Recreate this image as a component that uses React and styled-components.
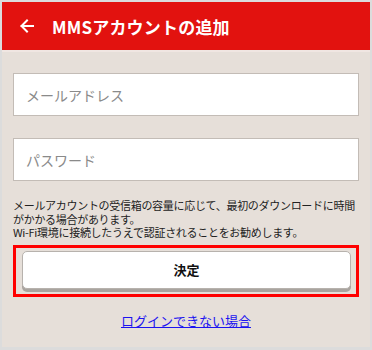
import React from 'react';
import styled, { createGlobalStyle } from 'styled-components';

const GlobalStyle = createGlobalStyle`
  html, body {
    margin: 0;
    padding: 0;
    background: #dcdcdc;
  }
  body {
    font-family: "Noto Sans CJK JP", "Liberation Sans", sans-serif;
  }
`;

const Frame = styled.div`
  width: 372px;
  height: 350px;
  box-sizing: border-box;
  padding: 2px 2px 3px 2px;
  background: #dcdcdc;
`;

const Screen = styled.div`
  height: 100%;
  display: flex;
  flex-direction: column;
  background: #e6dfd9;
`;

const Header = styled.header`
  height: 48px;
  flex-shrink: 0;
  display: flex;
  align-items: center;
  background: #e2120f;
  border-bottom: 2px solid #f0e6e2;
  color: #fff;
`;

const BackButton = styled.span`
  width: 50px;
  display: flex;
  justify-content: center;
`;

const Title = styled.h1`
  margin: 0;
  font-size: 17px;
  font-weight: 700;
  letter-spacing: 0.2px;
`;

const Body = styled.main`
  display: flex;
  flex-direction: column;
  padding: 21px 11px 0 11px;
`;

const Field = styled.input`
  height: 43px;
  box-sizing: border-box;
  border: 1px solid #c3bcb6;
  background: #fff;
  padding: 0 12px;
  font-family: inherit;
  font-size: 14px;
  color: #333;
  margin-bottom: ${p => p.gap}px;
  outline: none;
  &::placeholder {
    color: #8a8a8a;
  }
`;

const Note = styled.p`
  margin: 0 0 5px;
  font-size: 11px;
  line-height: 13.5px;
  color: #222;
  letter-spacing: -0.3px;
`;

const Highlight = styled.div`
  border: 3px solid #ff0000;
  padding: 3px 5px 5px 6px;
`;

const SubmitButton = styled.button`
  width: 100%;
  height: 38px;
  background: #fff;
  border: 1px solid #b7b2ad;
  border-radius: 5px;
  box-shadow: 0 3px 0 #a9a49f;
  font-family: inherit;
  font-size: 13px;
  font-weight: 700;
  color: #111;
`;

const HelpLink = styled.a`
  align-self: center;
  margin-top: 14px;
  font-size: 13px;
  color: #1c14f0;
  text-decoration: underline;
`;

const ArrowIcon = () => (
  <svg width="16" height="16" viewBox="0 0 16 16" fill="none" stroke="#fff" strokeWidth="2" strokeLinecap="square">
    <path d="M14 8H2.5M8 2.5L2.5 8L8 13.5" />
  </svg>
);

export default function App() {
  return (
    <>
      <GlobalStyle />
      <Frame>
        <Screen>
          <Header>
            <BackButton><ArrowIcon /></BackButton>
            <Title>MMSアカウントの追加</Title>
          </Header>
          <Body>
            <Field placeholder="メールアドレス" gap={22} />
            <Field type="password" placeholder="パスワード" gap={18} />
            <Note>
              メールアカウントの受信箱の容量に応じて、最初のダウンロードに時間がかかる場合があります。<br />
              Wi-Fi環境に接続したうえで認証されることをお勧めします。
            </Note>
            <Highlight>
              <SubmitButton>決定</SubmitButton>
            </Highlight>
            <HelpLink href="#">ログインできない場合</HelpLink>
          </Body>
        </Screen>
      </Frame>
    </>
  );
}
